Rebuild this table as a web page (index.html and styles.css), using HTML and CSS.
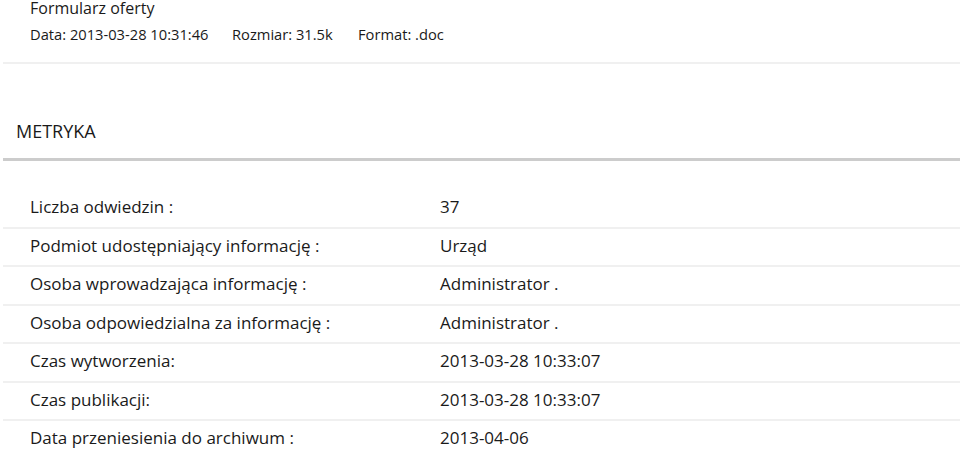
FILE: index.html
```html
<!DOCTYPE html>
<html lang="pl">
<head>
<meta charset="utf-8">
<title>Formularz oferty</title>
<link rel="stylesheet" href="styles.css">
</head>
<body>
<div class="file">
  <div class="file-title">Formularz oferty</div>
  <div class="file-meta">
    <span class="meta-item">Data: 2013-03-28 10:31:46</span>
    <span class="meta-item">Rozmiar: 31.5k</span>
    <span class="meta-item">Format: .doc</span>
  </div>
</div>
<div class="section">
  <h2 class="section-title">METRYKA</h2>
  <div class="metryka">
    <div class="row"><span class="label">Liczba odwiedzin :</span><span class="value">37</span></div>
    <div class="row"><span class="label">Podmiot udostępniający informację :</span><span class="value">Urząd</span></div>
    <div class="row"><span class="label">Osoba wprowadzająca informację :</span><span class="value">Administrator .</span></div>
    <div class="row"><span class="label">Osoba odpowiedzialna za informację :</span><span class="value">Administrator .</span></div>
    <div class="row"><span class="label">Czas wytworzenia:</span><span class="value">2013-03-28 10:33:07</span></div>
    <div class="row"><span class="label">Czas publikacji:</span><span class="value">2013-03-28 10:33:07</span></div>
    <div class="row"><span class="label">Data przeniesienia do archiwum :</span><span class="value">2013-04-06</span></div>
  </div>
</div>
</body>
</html>
```
FILE: styles.css
```css
html, body {
  margin: 0;
  padding: 0;
  background: #fff;
}
body {
  font-family: "Open Sans", "Noto Sans", sans-serif;
  color: #1a1a1a;
  overflow: hidden;
}
.file {
  padding: 0 30px;
  height: 62px;
}
.file-title {
  font-size: 16px;
  line-height: 16px;
}
.file-meta {
  font-size: 14.7px;
  line-height: 20px;
  margin-top: 8px;
  display: flex;
}
.meta-item:nth-child(1) { width: 202px; }
.meta-item:nth-child(2) { width: 126px; }
.section {
  margin-left: 3px;
  border-top: 2px solid #f0f0f0;
}
.section-title {
  margin: 0;
  font-weight: normal;
  font-size: 18px;
  line-height: 22px;
  padding: 56px 13px 16px;
  border-bottom: 3px solid #cccccc;
}
.metryka {
  margin-top: 29px;
}
.row {
  display: flex;
  font-size: 17px;
  line-height: 22px;
  padding: 6px 0 8.5px;
  border-bottom: 2px solid #f0f0f0;
}
.label {
  width: 410px;
  padding-left: 27px;
}
.value {
  flex: 1;
}
```
